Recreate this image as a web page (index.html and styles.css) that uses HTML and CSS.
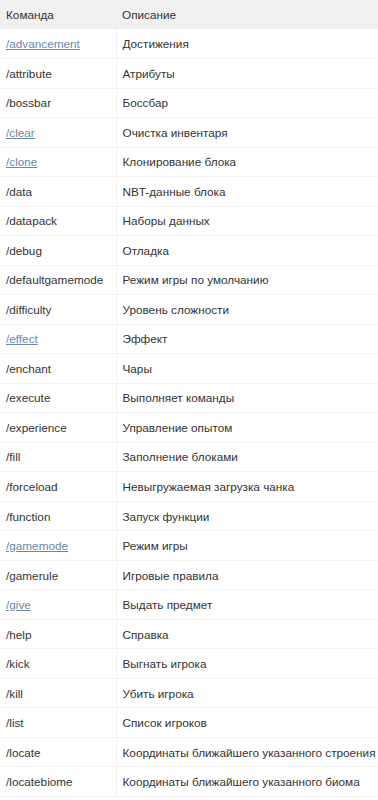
FILE: index.html
```html
<!DOCTYPE html>
<html lang="ru">
<head>
<meta charset="utf-8">
<link rel="stylesheet" href="styles.css">
</head>
<body>
<table class="cmds">
<colgroup><col class="c1"><col class="c2"></colgroup>
<thead>
<tr><th>Команда</th><th>Описание</th></tr>
</thead>
<tbody>
<tr><td><a href="#">/advancement</a></td><td>Достижения</td></tr>
<tr><td>/attribute</td><td>Атрибуты</td></tr>
<tr><td>/bossbar</td><td>Боссбар</td></tr>
<tr><td><a href="#">/clear</a></td><td>Очистка инвентаря</td></tr>
<tr><td><a href="#">/clone</a></td><td>Клонирование блока</td></tr>
<tr><td>/data</td><td>NBT-данные блока</td></tr>
<tr><td>/datapack</td><td>Наборы данных</td></tr>
<tr><td>/debug</td><td>Отладка</td></tr>
<tr><td>/defaultgamemode</td><td>Режим игры по умолчанию</td></tr>
<tr><td>/difficulty</td><td>Уровень сложности</td></tr>
<tr><td><a href="#">/effect</a></td><td>Эффект</td></tr>
<tr><td>/enchant</td><td>Чары</td></tr>
<tr><td>/execute</td><td>Выполняет команды</td></tr>
<tr><td>/experience</td><td>Управление опытом</td></tr>
<tr><td>/fill</td><td>Заполнение блоками</td></tr>
<tr><td>/forceload</td><td>Невыгружаемая загрузка чанка</td></tr>
<tr><td>/function</td><td>Запуск функции</td></tr>
<tr><td><a href="#">/gamemode</a></td><td>Режим игры</td></tr>
<tr><td>/gamerule</td><td>Игровые правила</td></tr>
<tr><td><a href="#">/give</a></td><td>Выдать предмет</td></tr>
<tr><td>/help</td><td>Справка</td></tr>
<tr><td>/kick</td><td>Выгнать игрока</td></tr>
<tr><td>/kill</td><td>Убить игрока</td></tr>
<tr><td>/list</td><td>Список игроков</td></tr>
<tr><td>/locate</td><td>Координаты ближайшего указанного строения</td></tr>
<tr><td>/locatebiome</td><td>Координаты ближайшего указанного биома</td></tr>
</tbody>
</table>
</body>
</html>
```
FILE: styles.css
```css
html, body {
  margin: 0;
  padding: 0;
  background: #fff;
}
.cmds {
  width: 378px;
  border-collapse: collapse;
  table-layout: fixed;
  font-family: "Liberation Sans", Arial, sans-serif;
  font-size: 11.75px;
  color: #333;
}
.c1 { width: 116px; }
.cmds th {
  background: #f0f0f0;
  font-weight: normal;
  text-align: left;
  height: 29px;
  padding: 0 6px;
  white-space: nowrap;
}
.cmds td {
  height: 29.52px;
  padding: 0 6px;
  border-bottom: 1px solid #f1f1f1;
  white-space: nowrap;
  box-sizing: border-box;
}
.cmds td:first-child {
  border-right: 1px solid #f1f1f1;
}
.cmds a {
  color: #6a87aa;
  text-decoration: underline;
}
```
